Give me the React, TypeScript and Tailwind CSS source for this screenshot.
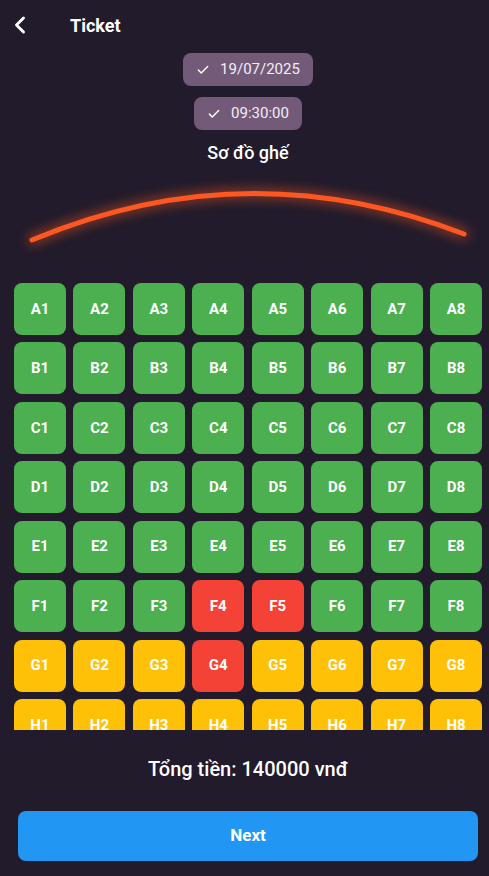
import { ChevronLeft, Check } from "lucide-react";

const rows = ["A", "B", "C", "D", "E", "F", "G", "H"];
const booked = ["F4", "F5", "G4"];

function seatColor(row: string, id: string) {
  if (booked.includes(id)) return "bg-[#f44336]";
  if (row === "G" || row === "H") return "bg-[#ffc107]";
  return "bg-[#4caf50]";
}

export default function App() {
  return (
    <div
      className="w-[489px] h-[876px] bg-[#211b2b] text-white flex flex-col overflow-hidden"
      style={{ fontFamily: "Roboto, 'Noto Sans', sans-serif" }}
    >
      {/* header */}
      <div className="h-[50px] flex items-center pl-[6px]">
        <ChevronLeft size={28} strokeWidth={2.5} className="text-white" />
        <span className="ml-[36px] text-[18px] font-bold">Ticket</span>
      </div>

      <div className="flex flex-col items-center pl-[7px]">
        <div className="mt-[3px] h-[33px] px-[13px] rounded-[8px] bg-[#735a79] flex items-center gap-[10px]">
          <Check size={14} strokeWidth={2.5} />
          <span className="text-[15px] text-[#f2eef4]">19/07/2025</span>
        </div>
        <div className="mt-[11px] h-[33px] px-[13px] rounded-[8px] bg-[#735a79] flex items-center gap-[10px]">
          <Check size={14} strokeWidth={2.5} />
          <span className="text-[15px] text-[#f2eef4]">09:30:00</span>
        </div>
        <div className="mt-[10px] text-[18px] font-medium leading-[26px]">Sơ đồ ghế</div>
      </div>

      {/* screen arc */}
      <div className="h-[110px]">
        <svg width="489" height="110" viewBox="0 0 489 110">
          <defs>
            <filter id="glow" x="-20%" y="-100%" width="140%" height="300%">
              <feGaussianBlur stdDeviation="6" />
            </filter>
          </defs>
          <path d="M32 74 Q247 -16 464 68" stroke="#ff5722" strokeWidth="10" fill="none" opacity="0.5" filter="url(#glow)" strokeLinecap="round" />
          <path d="M32 74 Q247 -16 464 68" stroke="#ff5722" strokeWidth="5" fill="none" strokeLinecap="round" />
        </svg>
      </div>

      {/* seats */}
      <div className="ml-[14px] w-[468px] h-[447px] mt-[7px] overflow-hidden">
        <div className="grid grid-cols-8 gap-[7.5px]">
          {rows.map((r) =>
            [1, 2, 3, 4, 5, 6, 7, 8].map((n) => {
              const id = `${r}${n}`;
              return (
                <div
                  key={id}
                  className={`aspect-square rounded-[8px] flex items-center justify-center text-[15px] font-bold text-white ${seatColor(r, id)}`}
                >
                  {id}
                </div>
              );
            })
          )}
        </div>
      </div>

      <div className="mt-[24px] pl-[7px] text-center text-[20px] font-medium leading-[30px]">Tổng tiền: 140000 vnđ</div>

      <div className="ml-[18px] w-[460px] mt-[27px]">
        <button className="w-full h-[50px] rounded-[8px] bg-[#2196f3] text-white text-[17px] font-bold">Next</button>
      </div>
    </div>
  );
}
